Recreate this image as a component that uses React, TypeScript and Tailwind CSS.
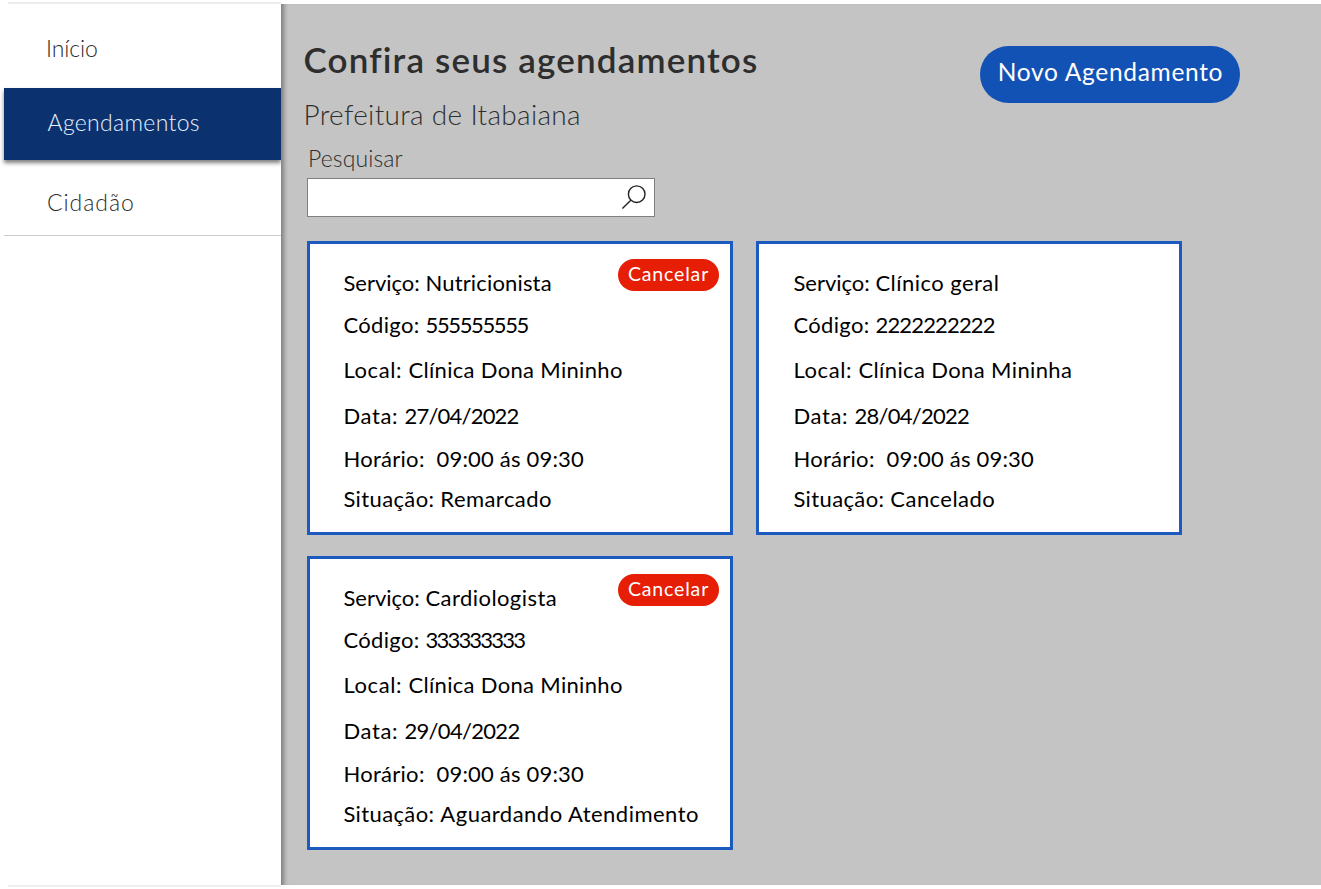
type Value = { text: string; tracking: string };

type Appointment = {
  service: Value;
  code: Value;
  place: Value;
  date: Value;
  time: Value;
  status: Value;
  cancelable: boolean;
  inset: string;
};

const time: Value = { text: "09:00 ás 09:30", tracking: "tracking-[0.19px]" };

const appointments: Appointment[] = [
  {
    service: { text: "Nutricionista", tracking: "tracking-[0.16px]" },
    code: { text: "555555555", tracking: "tracking-[-1.38px]" },
    place: { text: "Clínica Dona Mininho", tracking: "tracking-[0.32px]" },
    date: { text: "27/04/2022", tracking: "tracking-[-0.79px]" },
    time,
    status: { text: "Remarcado", tracking: "tracking-[0.45px]" },
    cancelable: true,
    inset: "pl-[33.4px]",
  },
  {
    service: { text: "Clínico geral", tracking: "tracking-[0.46px]" },
    code: { text: "2222222222", tracking: "tracking-[-0.85px]" },
    place: { text: "Clínica Dona Mininha", tracking: "tracking-[0.38px]" },
    date: { text: "28/04/2022", tracking: "tracking-[-0.75px]" },
    time,
    status: { text: "Cancelado", tracking: "tracking-[0.45px]" },
    cancelable: false,
    inset: "pl-[34.4px]",
  },
  {
    service: { text: "Cardiologista", tracking: "tracking-[0.44px]" },
    code: { text: "333333333", tracking: "tracking-[-1.8px]" },
    place: { text: "Clínica Dona Mininho", tracking: "tracking-[0.32px]" },
    date: { text: "29/04/2022", tracking: "tracking-[-0.7px]" },
    time,
    status: { text: "Aguardando Atendimento", tracking: "tracking-[0.48px]" },
    cancelable: true,
    inset: "pl-[33.4px]",
  },
];

type RowProps = { label: string; value: Value; height: string; tracking: string };

function Row({ label, value, height, tracking }: RowProps) {
  return (
    <p className={`${height} whitespace-pre leading-6`}>
      <span className={tracking}>{label}</span>
      <span className={value.tracking}>{value.text}</span>
    </p>
  );
}

function Card({ item }: { item: Appointment }) {
  return (
    <article className={`relative h-[294px] w-[426px] border-[3px] border-[#1d5abf] bg-white pt-[27px] text-[22px] text-black ${item.inset}`}>
      <Row label="Serviço: " value={item.service} height="h-[42px]" tracking="tracking-[0px]" />
      <Row label="Código: " value={item.code} height="h-[45px]" tracking="tracking-[0.34px]" />
      <Row label="Local: " value={item.place} height="h-[46px]" tracking="tracking-[0.62px]" />
      <Row label="Data: " value={item.date} height="h-[43px]" tracking="tracking-[0.65px]" />
      <Row label="Horário:  " value={item.time} height="h-[40px]" tracking="tracking-[0.29px]" />
      <Row label="Situação: " value={item.status} height="h-6" tracking="tracking-[0.37px]" />
      {item.cancelable && (
        <button className="absolute right-[11px] top-[15px] flex h-8 w-[101px] items-center justify-center rounded-full bg-[#e61e05] pb-[3px] text-[19.5px] tracking-[0.85px] text-white">
          Cancelar
        </button>
      )}
    </article>
  );
}

function Sidebar() {
  return (
    <nav className="flex w-[281px] flex-col pl-1 text-[23px] font-light leading-7 text-[#2b2b2b]">
      <div className="ml-1 mt-0.5 h-0.5 bg-[#ececec]" />
      <a className="h-[84px] pl-[42px] pt-[30px] tracking-[-0.1px]">Início</a>
      <a className="h-[72px] bg-[#0b316e] pl-[43.5px] pt-5 tracking-[0.32px] text-[#e8f1ff] shadow-[0_3px_4px_rgba(0,0,0,0.5)]">
        Agendamentos
      </a>
      <a className="h-[76px] border-b border-[#cbcbcb] pl-[43px] pt-7 tracking-[0.95px]">Cidadão</a>
      <div className="mb-0.5 ml-1 mt-auto h-0.5 bg-[#efefef]" />
    </nav>
  );
}

export default function App() {
  return (
    <div className="flex h-[889px] w-[1321px] overflow-hidden bg-white font-['Lato',sans-serif]">
      <Sidebar />
      <main className="mt-1 h-[881px] flex-1 bg-[#c4c4c4] pl-[26px] pt-[35px] shadow-[inset_6px_0_4px_-3px_rgba(0,0,0,0.35)]">
        <header className="flex justify-between pr-[81px]">
          <div className="-ml-[3.5px] text-[#2e2e2e]">
            <h1 className="text-[35px] font-semibold leading-10 tracking-[1.16px]">Confira seus agendamentos</h1>
            <p className="mt-[19px] text-[28px] font-light leading-8 tracking-[0.3px]">Prefeitura de Itabaiana</p>
          </div>
          <button className="mt-[7px] flex h-[57px] w-[260px] items-center justify-center rounded-full bg-[#1352b5] pb-1 pl-px text-[24.5px] tracking-[0.69px] text-white">
            Novo Agendamento
          </button>
        </header>
        <label className="ml-px mt-3.5 block text-[23px] font-light leading-7 tracking-[0.1px] text-[#2e2e2e]">Pesquisar</label>
        <div className="mt-1.5 flex h-[39px] w-[348px] items-center justify-end border border-[#808080] bg-white pb-px pr-[7px]">
          <svg width="26" height="26" viewBox="0 0 26 26" fill="none" stroke="#222" strokeWidth="1.4">
            <circle cx="15.7" cy="10.2" r="8.3" />
            <path d="M9.8 16.2 1.4 24.6" />
          </svg>
        </div>
        <section className="mt-6 grid w-[875px] grid-cols-2 gap-x-[23px] gap-y-[21px]">
          {appointments.map((item) => (
            <Card key={item.service.text} item={item} />
          ))}
        </section>
      </main>
    </div>
  );
}
